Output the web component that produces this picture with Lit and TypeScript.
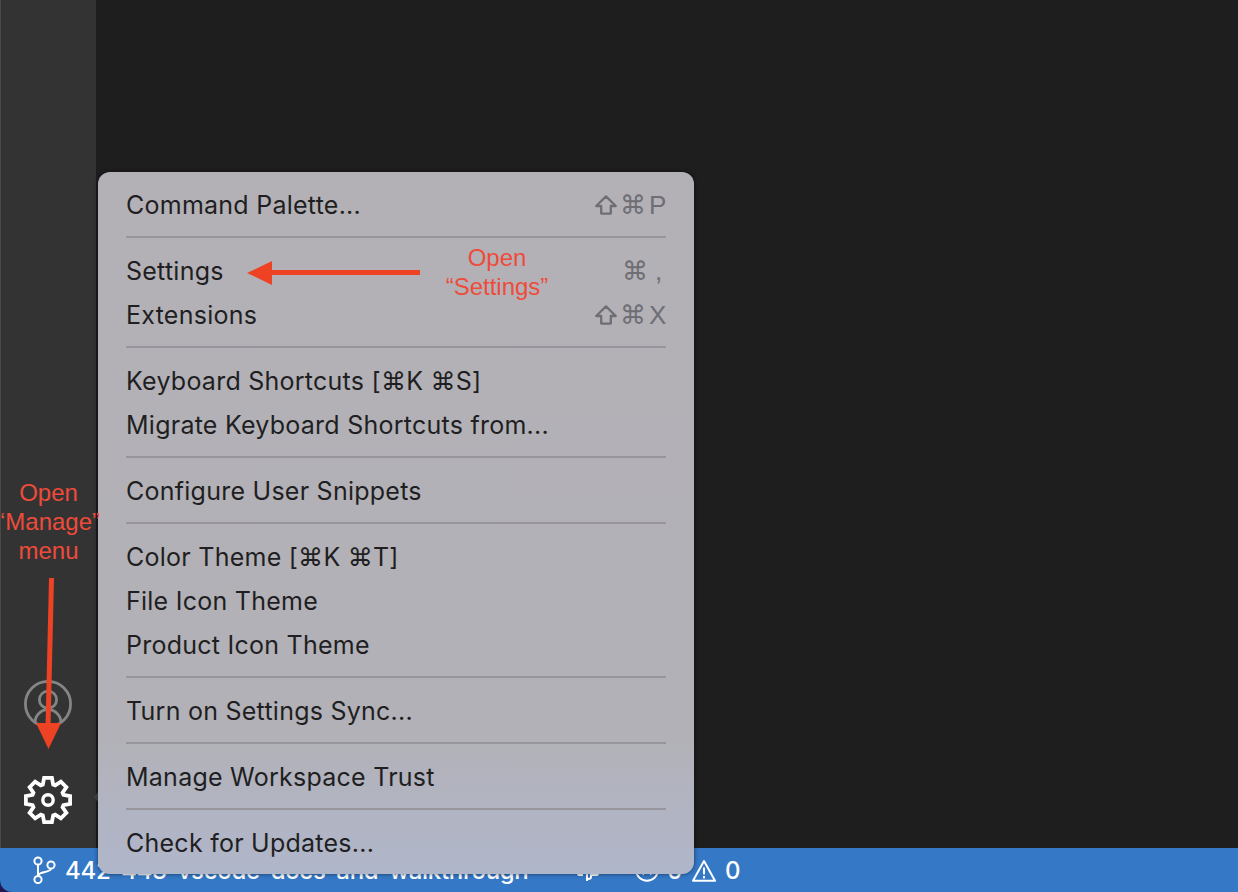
import { LitElement, html, css, svg } from "lit";
import { customElement } from "lit/decorators.js";

function gearPath(): string {
  const pts: string[] = [];
  for (let k = 0; k < 8; k++) {
    const a = ((k * 45 - 90) * Math.PI) / 180;
    const ux = Math.cos(a), uy = Math.sin(a);
    const px = -uy, py = ux;
    const at = (r: number, w: number) => `${(24 + ux * r + px * w).toFixed(2)} ${(24 + uy * r + py * w).toFixed(2)}`;
    pts.push(at(15.4, -5.2), at(22.1, -3.9), at(22.1, 3.9), at(15.4, 5.2));
  }
  return "M" + pts.join("L") + "Z";
}
const GEAR = gearPath();

const shift = html`<svg class="shift" viewBox="0 0 22 20"><path d="M11 1.4 1.2 11H6.2V18.6H15.8V11H20.8Z" fill="none" stroke="currentColor" stroke-width="2.3" stroke-linejoin="round"/></svg>`;

type Item = { label: string; keys?: unknown };
const groups: Item[][] = [
  [{ label: "Command Palette...", keys: html`${shift}<span>⌘</span><span class="k">P</span>` }],
  [
    { label: "Settings", keys: html`<span>⌘</span><span class="k comma">,</span>` },
    { label: "Extensions", keys: html`${shift}<span>⌘</span><span class="k">X</span>` },
  ],
  [{ label: "Keyboard Shortcuts [⌘K ⌘S]" }, { label: "Migrate Keyboard Shortcuts from..." }],
  [{ label: "Configure User Snippets" }],
  [{ label: "Color Theme [⌘K ⌘T]" }, { label: "File Icon Theme" }, { label: "Product Icon Theme" }],
  [{ label: "Turn on Settings Sync..." }],
  [{ label: "Manage Workspace Trust" }],
  [{ label: "Check for Updates..." }],
];

@customElement("app-root")
export class AppRoot extends LitElement {
  static styles = css`
    :host { display: block; width: 1238px; height: 892px; position: relative; overflow: hidden; background: #24164f; font-family: Inter, "Noto Sans", sans-serif; }
    .window { display: flex; flex-direction: column; height: 892px; border-bottom-left-radius: 12px; overflow: hidden; }
    .main { flex: 1; display: flex; min-height: 0; }
    .activity { width: 96px; background: #333333; border-left: 1px solid #4a4a4a; display: flex; flex-direction: column; align-items: center; justify-content: flex-end; padding: 0 1px 24px 0; gap: 48px; box-sizing: border-box; }
    .activity svg { display: block; width: 48px; height: 48px; }
    .editor { flex: 1; background: #1e1e1e; }
    .status { height: 44px; background: #3478c6; color: #fff; display: flex; align-items: center; padding-left: 32px; font-size: 24px; font-weight: 500; }
    .branch { width: 24px; height: 28px; margin-right: 9px; flex: none; }
    .branch-name { white-space: nowrap; width: 494px; letter-spacing: -0.3px; }
    .status-icon { flex: none; }
    .rem { width: 22px; height: 24px; margin: 0 36px 0 18px; }
    .err { width: 24px; height: 24px; margin-right: 8px; }
    .num { width: 14px; flex: none; }
    .warn { width: 24px; height: 23px; margin: 0 9px 0 11px; }
    .menu { position: absolute; left: 98px; top: 172px; width: 596px; height: 702px; box-sizing: border-box; padding: 11px 28px 9px 28px; border-radius: 12px; background: linear-gradient(180deg, #b3b1b6 0%, #b2b1b7 80%, #b0b6ca 100%); box-shadow: 0 0 4px rgba(0,0,0,.55); color: #1f1f22; font-size: 25px; letter-spacing: 0.25px; }
    .pointer { position: absolute; left: 94px; top: 792px; width: 0; height: 0; border: 5px solid transparent; border-left: none; border-right-color: #454545; border-right-width: 4px; }
    .row { height: 44px; display: flex; justify-content: space-between; align-items: center; white-space: nowrap; }
    .sep { height: 2px; background: #98969c; margin: 9px 0 11px; }
    .keys { display: flex; align-items: center; gap: 3px; color: #6f6e74; font-family: "Liberation Sans", sans-serif; font-size: 26px; letter-spacing: 0; }
    .keys .k { width: 17px; text-align: center; }
    .keys .comma { width: 15px; }
    .shift { width: 22px; height: 20px; display: block; }
    .note { position: absolute; color: #ee4b3b; font-family: "Liberation Sans", sans-serif; font-size: 24px; line-height: 29px; text-align: center; white-space: nowrap; }
    .note-settings { left: 420px; top: 243px; width: 154px; }
    .note-manage { left: 0; top: 478px; width: 97px; }
    .arrows { position: absolute; inset: 0; width: 1238px; height: 892px; pointer-events: none; }
  `;

  render() {
    return html`
      <div class="window">
        <div class="main">
          <div class="activity">
            <svg viewBox="0 0 48 48" fill="none" stroke="#858585" stroke-width="2.8">
              <circle cx="24" cy="24" r="22.6"/>
              <circle cx="24" cy="19.7" r="8.6"/>
              <path d="M11 42.6A13 13 0 0 1 37 42.6"/>
            </svg>
            <svg viewBox="0 0 48 48" fill="none" stroke="#fff" stroke-width="3.8">
              <path d="${GEAR}" stroke-linejoin="miter"/>
              <circle cx="24" cy="24" r="5.2" stroke-width="3.4"/>
            </svg>
          </div>
          <div class="editor"></div>
        </div>
        <div class="status">
          <svg class="branch" viewBox="0 0 24 28" fill="none" stroke="#fff" stroke-width="2">
            <circle cx="6" cy="5" r="3.6"/><circle cx="6" cy="23.5" r="3.6"/><circle cx="19" cy="9" r="3.6"/>
            <path d="M6 8.6V19.9M19 12.6C19 17 6.5 15 6 19.9"/>
          </svg>
          <span class="branch-name">442-443-vscode-docs-and-walkthrough</span>
          <svg class="status-icon rem" viewBox="0 0 22 24" fill="none" stroke="#fff" stroke-width="2"><path d="M6 17H2C1 17 1 16 1 15V12H21V15C21 16 21 17 20 17H14.5M10 5V23M14 8V19C14 21 12 21 11 21"/></svg>
          <svg class="status-icon err" viewBox="0 0 24 24" fill="none" stroke="#fff" stroke-width="2"><circle cx="12" cy="12" r="10.8"/><path d="M7.5 7.5 16.5 16.5M16.5 7.5 7.5 16.5"/></svg>
          <span class="num">0</span>
          <svg class="status-icon warn" viewBox="0 0 24 23" fill="none" stroke="#fff" stroke-width="2"><path d="M12 2 23 21.8H1Z" stroke-linejoin="round"/><path d="M12 8.5V15.5M12 17V19.5"/></svg>
          <span class="num">0</span>
        </div>
      </div>

      <div class="pointer"></div>
      <div class="menu">
        ${groups.map((g, i) => html`
          ${i > 0 ? html`<div class="sep"></div>` : ""}
          ${g.map((it) => html`<div class="row"><span>${it.label}</span>${it.keys ? html`<span class="keys">${it.keys}</span>` : ""}</div>`)}
        `)}
      </div>

      <div class="note note-settings">Open<br />“Settings”</div>
      <div class="note note-manage">Open<br />‘Manage”<br />menu</div>
      <svg class="arrows" viewBox="0 0 1238 892">
        ${svg`<path d="M420 272.5H268" stroke="#ee4225" stroke-width="5" fill="none"/>
        <path d="M247 273 272 261V285Z" fill="#ee4225"/>
        <path d="M51.5 578 48 728" stroke="#ee4225" stroke-width="5" fill="none"/>
        <path d="M36 723H61L48.5 749Z" fill="#ee4225"/>`}
      </svg>
    `;
  }
}
